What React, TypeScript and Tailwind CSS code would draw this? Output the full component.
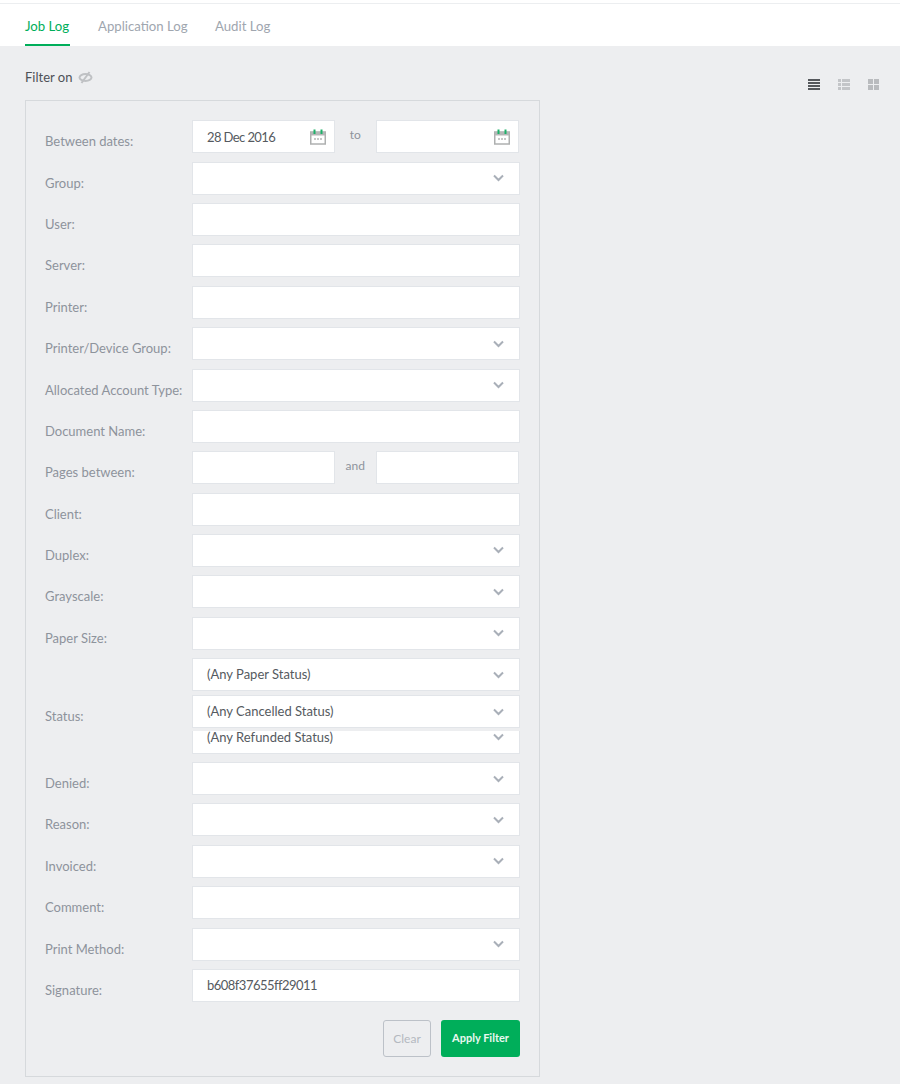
import { ReactNode } from 'react';

function Chevron() {
  return (
    <svg className="w-[11px] h-[8px] text-[#a9afb8]" viewBox="0 0 11 8" fill="none" stroke="currentColor" strokeWidth={2}>
      <path d="M1 1.5l4.5 4.5L10 1.5" />
    </svg>
  );
}

function CalendarIcon() {
  return (
    <svg className="w-[16px] h-[16px]" viewBox="0 0 16 16" fill="none">
      <rect x="0.75" y="3" width="14.5" height="12" fill="#fff" stroke="#aeb0b0" strokeWidth="1.5" />
      <rect x="0.75" y="3" width="14.5" height="3.5" fill="#b5b7b7" />
      <rect x="3.5" y="0.5" width="2" height="4.5" fill="#1cb26a" />
      <rect x="10.5" y="0.5" width="2" height="4.5" fill="#1cb26a" />
      <path d="M4 10h2M7 10h2M10 10h2" stroke="#b5b7b7" strokeWidth="1.4" />
    </svg>
  );
}

function EyeOff() {
  return (
    <svg className="w-[15px] h-[13px]" viewBox="0 0 15 13" fill="none" stroke="#bfc1c4" strokeWidth="2">
      <ellipse cx="7.5" cy="6.5" rx="6" ry="3.5" />
      <path d="M11.5 1L3.5 12" />
    </svg>
  );
}

function Row({ label, children }: { label: string; children: ReactNode }) {
  return (
    <div className="flex mb-[8.37px]">
      <div className="w-[147px] shrink-0 pt-[12px] text-[13px] leading-[18px] text-[#8d939c]">{label}</div>
      <div className="flex-1">{children}</div>
    </div>
  );
}

function Input({ value, tight }: { value?: string; tight?: boolean }) {
  return (
    <div className={`h-[33px] bg-white border border-[#e2e5e9] pl-[14px] pt-[1px] flex items-center text-[13px] text-[#555a60] ${tight ? 'tracking-[-0.52px]' : ''}`}>
      {value}
    </div>
  );
}

function Select({ value, className = '' }: { value?: string; className?: string }) {
  return (
    <div className={`h-[33px] bg-white border border-[#e2e5e9] pl-[14px] pr-[15px] flex items-center justify-between text-[13px] text-[#555a60] ${className}`}>
      <span className="pt-[1px]">{value}</span>
      <Chevron />
    </div>
  );
}

function DateInput({ value }: { value?: string }) {
  return (
    <div className="w-[142.5px] h-[33px] bg-white border border-[#e2e5e9] pl-[14px] pr-[8px] flex items-center justify-between text-[13px] text-[#555a60]">
      <span className="tracking-[-0.6px] pt-[1px]">{value}</span>
      <CalendarIcon />
    </div>
  );
}

function Pair({ word, left, right }: { word: string; left: ReactNode; right: ReactNode }) {
  return (
    <div className="flex items-center">
      {left}
      <div className="w-[41.5px] text-center text-[12px] text-[#8d939c] -mt-[3px]">{word}</div>
      {right}
    </div>
  );
}

export default function App() {
  return (
    <div className="min-h-[1084px] bg-[#edeef0] font-['Lato','Noto_Sans',sans-serif]">
      <div className="bg-white h-[46px] pt-[3px]">
        <div className="border-t border-[#eceef0] flex pl-[25px] text-[13.2px]">
          <div className="w-[45px] h-[42px] pt-[13px] border-b-[2px] border-[#00ae5a] text-[#00ae5a] whitespace-nowrap">Job Log</div>
          <div className="w-[90px] ml-[28px] pt-[13px] text-[#a0a6af] whitespace-nowrap">Application Log</div>
          <div className="ml-[27px] pt-[13px] text-[#a0a6af] whitespace-nowrap">Audit Log</div>
        </div>
      </div>

      <div className="px-[25px]">
        <div className="h-[54px] pt-[22px] flex justify-between">
          <div className="flex gap-[6px] items-start text-[13px] leading-[18px] text-[#4d5157]">
            <span>Filter on</span>
            <span className="pt-[3px]"><EyeOff /></span>
          </div>
          <div className="flex gap-[18px] pt-[11px] -mr-[4px]">
            <div className="w-[12px] h-[11px] flex flex-col justify-between">
              <div className="h-[2px] bg-[#55585c]" />
              <div className="h-[2px] bg-[#55585c]" />
              <div className="h-[2px] bg-[#55585c]" />
              <div className="h-[2px] bg-[#55585c]" />
            </div>
            <div className="w-[12px] h-[11px] grid grid-cols-[3px_8px] grid-rows-3 gap-[1px]">
              <div className="bg-[#c3c5c8]" /><div className="bg-[#c3c5c8]" />
              <div className="bg-[#c3c5c8]" /><div className="bg-[#c3c5c8]" />
              <div className="bg-[#c3c5c8]" /><div className="bg-[#c3c5c8]" />
            </div>
            <div className="w-[11px] h-[11px] grid grid-cols-2 grid-rows-2 gap-[1px]">
              <div className="bg-[#b9bbbe]" /><div className="bg-[#b9bbbe]" />
              <div className="bg-[#b9bbbe]" /><div className="bg-[#b9bbbe]" />
            </div>
          </div>
        </div>

        <div className="w-[515px] h-[977px] border border-[#d6d9dc] pt-[19.4px] pl-[19px] pr-[19px]">
          <Row label="Between dates:">
            <Pair word="to" left={<DateInput value="28 Dec 2016" />} right={<DateInput />} />
          </Row>
          <Row label="Group:"><Select /></Row>
          <Row label="User:"><Input /></Row>
          <Row label="Server:"><Input /></Row>
          <Row label="Printer:"><Input /></Row>
          <Row label="Printer/Device Group:"><Select /></Row>
          <Row label="Allocated Account Type:"><Select /></Row>
          <Row label="Document Name:"><Input /></Row>
          <Row label="Pages between:">
            <Pair
              word="and"
              left={<div className="w-[142.5px] h-[33px] bg-white border border-[#e2e5e9]" />}
              right={<div className="w-[142.5px] h-[33px] bg-white border border-[#e2e5e9]" />}
            />
          </Row>
          <Row label="Client:"><Input /></Row>
          <Row label="Duplex:"><Select /></Row>
          <Row label="Grayscale:"><Select /></Row>
          <Row label="Paper Size:"><Select /></Row>

          <div className="flex items-center mb-[8px]">
            <div className="w-[147px] shrink-0 text-[13px] leading-[18px] text-[#8d939c] pt-[20px]">Status:</div>
            <div className="flex-1">
              <Select value="(Any Paper Status)" className="mb-[4px]" />
              <Select value="(Any Cancelled Status)" className="mb-[3px]" />
              <div className="h-[23px] bg-white border-x border-b border-[#e2e5e9] pl-[14px] pr-[15px] pb-[10px] flex items-center justify-between text-[13px] text-[#555a60]">
                <span className="pt-[1px]">(Any Refunded Status)</span>
                <Chevron />
              </div>
            </div>
          </div>

          <Row label="Denied:"><Select /></Row>
          <Row label="Reason:"><Select /></Row>
          <Row label="Invoiced:"><Select /></Row>
          <Row label="Comment:"><Input /></Row>
          <Row label="Print Method:"><Select /></Row>
          <Row label="Signature:"><Input value="b608f37655ff29011" tight /></Row>

          <div className="flex justify-end gap-[10px] pt-[10px]">
            <button className="w-[48px] h-[37px] rounded-[3px] border-[1.5px] border-[#bcc1c8] text-[12px] text-[#b4b9c0]">Clear</button>
            <button className="w-[79px] h-[37px] rounded-[3px] bg-[#00ae5a] text-[11px] font-bold text-[#e9f8f0]">Apply Filter</button>
          </div>
        </div>
      </div>
    </div>
  );
}
